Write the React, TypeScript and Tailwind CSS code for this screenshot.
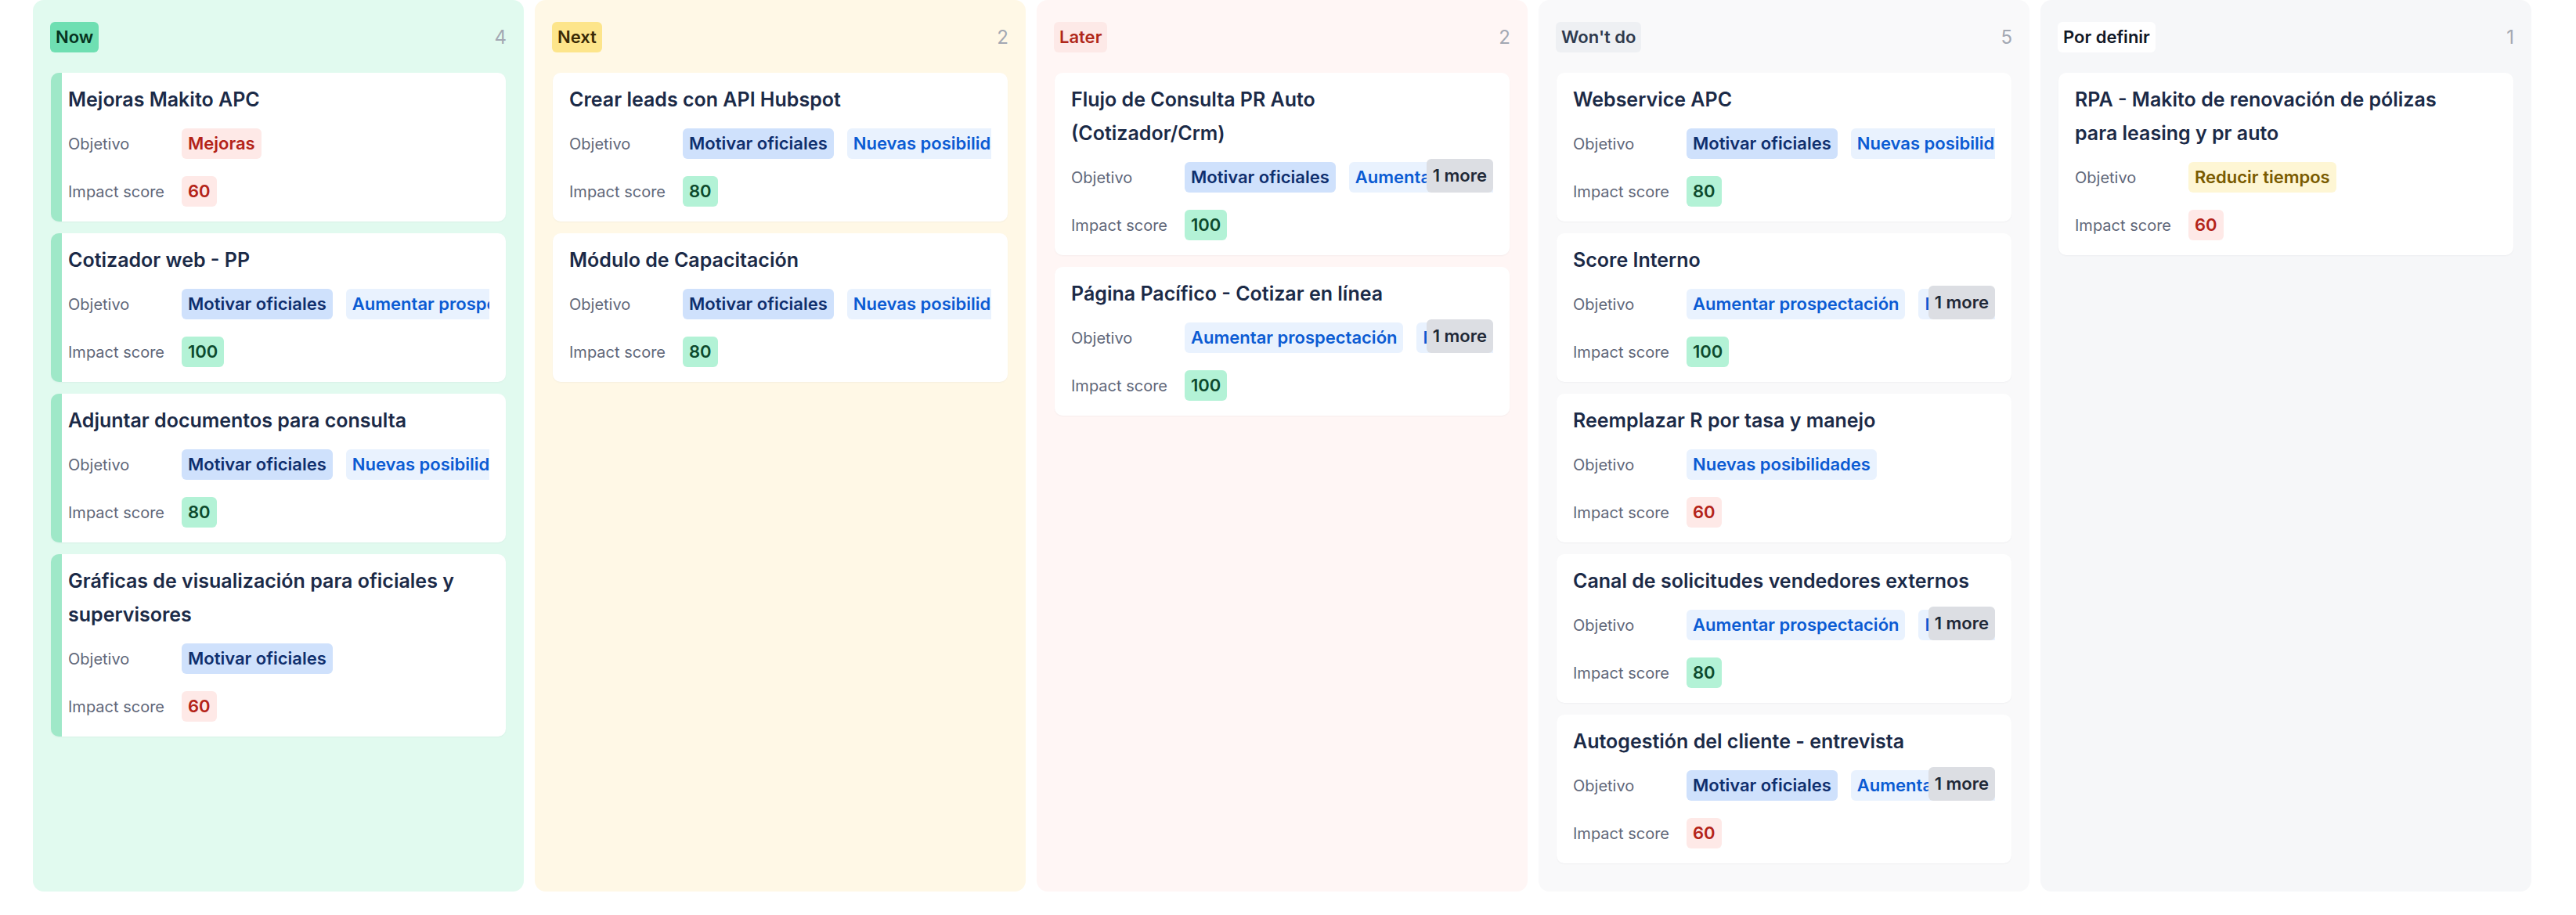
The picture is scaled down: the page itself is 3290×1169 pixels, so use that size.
import React from "react";

type TagTone = "navy" | "blue" | "red" | "amber";

type Item = {
  title: string;
  tags: { label: string; tone: TagTone }[];
  more?: number;
  score: number;
};

type Column = {
  name: string;
  bg: string;
  badge: string;
  accent?: string;
  items: Item[];
};

const motivar = { label: "Motivar oficiales", tone: "navy" as TagTone };
const aumentar = { label: "Aumentar prospectación", tone: "blue" as TagTone };
const nuevas = { label: "Nuevas posibilidades", tone: "blue" as TagTone };

const columns: Column[] = [
  {
    name: "Now",
    bg: "bg-[#e1faef]",
    badge: "bg-[#6fdfb2] text-[#06331f]",
    accent: "border-l-[14px] border-[#9fe8c8] pl-[8px]",
    items: [
      { title: "Mejoras Makito APC", tags: [{ label: "Mejoras", tone: "red" }], score: 60 },
      { title: "Cotizador web - PP", tags: [motivar, aumentar], score: 100 },
      { title: "Adjuntar documentos para consulta", tags: [motivar, nuevas], score: 80 },
      { title: "Gráficas de visualización para oficiales y supervisores", tags: [motivar], score: 60 },
    ],
  },
  {
    name: "Next",
    bg: "bg-[#fff8e6]",
    badge: "bg-[#fde58b] text-[#3b2a05]",
    items: [
      { title: "Crear leads con API Hubspot", tags: [motivar, nuevas], score: 80 },
      { title: "Módulo de Capacitación", tags: [motivar, nuevas], score: 80 },
    ],
  },
  {
    name: "Later",
    bg: "bg-[#fff6f5]",
    badge: "bg-[#fde9e7] text-[#b0281a]",
    items: [
      { title: "Flujo de Consulta PR Auto (Cotizador/Crm)", tags: [motivar, aumentar, nuevas], more: 1, score: 100 },
      { title: "Página Pacífico - Cotizar en línea", tags: [aumentar, nuevas, motivar], more: 1, score: 100 },
    ],
  },
  {
    name: "Won't do",
    bg: "bg-[#f9f9fa]",
    badge: "bg-[#eef0f3] text-[#2f3a4d]",
    items: [
      { title: "Webservice APC", tags: [motivar, nuevas], score: 80 },
      { title: "Score Interno", tags: [aumentar, nuevas, motivar], more: 1, score: 100 },
      { title: "Reemplazar R por tasa y manejo", tags: [nuevas], score: 60 },
      { title: "Canal de solicitudes vendedores externos", tags: [aumentar, nuevas, motivar], more: 1, score: 80 },
      { title: "Autogestión del cliente - entrevista", tags: [motivar, aumentar, nuevas], more: 1, score: 60 },
    ],
  },
  {
    name: "Por definir",
    bg: "bg-[#f6f7f9]",
    badge: "bg-white text-[#111827]",
    items: [
      {
        title: "RPA - Makito de renovación de pólizas para leasing y pr auto",
        tags: [{ label: "Reducir tiempos", tone: "amber" }],
        score: 60,
      },
    ],
  },
];

const toneClass: Record<TagTone, string> = {
  navy: "bg-[#cfe1fc] text-[#0f2f6e]",
  blue: "bg-[#e9f2fe] text-[#0b5bd3]",
  red: "bg-[#fee9e7] text-[#b42318]",
  amber: "bg-[#fef6d4] text-[#7a5b00]",
};

function Tag({ label, tone }: { label: string; tone: TagTone }) {
  return (
    <span
      className={`shrink-0 whitespace-nowrap rounded-[6px] px-[8px] h-[39px] flex items-center text-[22px] font-semibold ${toneClass[tone]}`}
    >
      {label}
    </span>
  );
}

function Card({ item, accent }: { item: Item; accent?: string }) {
  const scoreTone: TagTone = item.score >= 80 ? "navy" : "red";
  return (
    <div
      className={`bg-white rounded-[10px] pt-[13px] pb-[19px] pr-[21px] shadow-[0_1px_2px_rgba(15,23,42,0.04)] ${
        accent ?? "pl-[21px]"
      }`}
    >
      <h3 className="max-w-[510px] text-[25px] leading-[43px] font-semibold text-[#1b2a47]">{item.title}</h3>
      <div className="mt-[15px] flex flex-col gap-[22px]">
        <div className="flex items-center h-[39px]">
          <span className="w-[145px] shrink-0 text-[20px] text-[#5f6779]">Objetivo</span>
          <div className="relative flex-1 min-w-0">
            <div className="flex gap-[17px] overflow-hidden">
              {item.tags.map((t, i) => (
                <Tag key={i} label={t.label} tone={t.tone} />
              ))}
            </div>
            {item.more ? (
              <span className="absolute right-0 bottom-0 h-[43px] px-[8px] rounded-[6px] bg-[#dcdee3] text-[#1f2937] text-[22px] font-semibold flex items-center whitespace-nowrap">
                {item.more} more
              </span>
            ) : null}
          </div>
        </div>
        <div className="flex items-center h-[39px]">
          <span className="w-[145px] shrink-0 text-[20px] text-[#5f6779]">Impact score</span>
          {scoreTone === "navy" ? (
            <span className="rounded-[6px] px-[8px] h-[39px] flex items-center text-[22px] font-semibold bg-[#b3f2d6] text-[#0d4a2d]">
              {item.score}
            </span>
          ) : (
            <Tag label={String(item.score)} tone="red" />
          )}
        </div>
      </div>
    </div>
  );
}

export default function App() {
  return (
    <div
      className="h-[1169px] bg-white flex gap-[14px] pl-[42px] pb-[30px]"
      style={{ fontFamily: "Inter, 'Noto Sans', sans-serif" }}
    >
      {columns.map((col) => (
        <section key={col.name} className={`w-[627px] shrink-0 rounded-[14px] flex flex-col ${col.bg}`}>
          <header className="h-[93px] pt-[28px] px-[22px]">
            <div className="flex items-center justify-between h-[39px]">
              <span className={`rounded-[6px] px-[7px] h-[39px] flex items-center text-[22px] font-semibold ${col.badge}`}>
                {col.name}
              </span>
              <span className="text-[24px] text-[#a3a8b3]">{col.items.length}</span>
            </div>
          </header>
          <div className="flex flex-col gap-[15px] px-[23px]">
            {col.items.map((item) => (
              <Card key={item.title} item={item} accent={col.accent} />
            ))}
          </div>
        </section>
      ))}
    </div>
  );
}
